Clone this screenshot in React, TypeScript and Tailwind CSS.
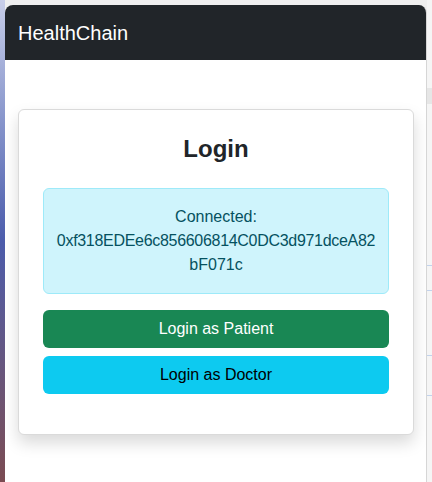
export default function App() {
  return (
    <div
      className="flex h-[482px] w-[432px] overflow-hidden bg-[#efefef]"
      style={{ fontFamily: '"Liberation Sans", "Segoe UI", Arial, sans-serif' }}
    >
      {/* desktop behind the popup */}
      <div className="h-full w-[5px] shrink-0 bg-gradient-to-b from-[#c9cfe9] via-[#4b5bab] to-[#7b4b52]" />

      <div className="mt-[5px] flex w-[422px] shrink-0 flex-col overflow-hidden rounded-t-lg border-r border-[#d6d6d6] bg-white">
        <nav className="flex h-[55px] shrink-0 items-center bg-[#212529] px-[13px]">
          <span className="text-[20px] text-white">HealthChain</span>
        </nav>

        <div className="pt-[49px] pr-[12px] pl-[13px]">
          <div className="rounded-md border border-[#dadada] bg-white p-6 shadow-[0_8px_16px_rgba(0,0,0,0.15)]">
            <h3 className="mb-6 text-center text-[24px] leading-[30px] font-bold text-[#212529]">Login</h3>

            <div className="mb-4 flex flex-col items-center rounded-md border border-[#9eeaf9] bg-[#cff4fc] p-4 text-[16px] leading-6 text-[#055160]">
              <span className="whitespace-nowrap">Connected:</span>
              <span className="whitespace-nowrap tracking-[-0.3px]">0xf318EDEe6c856606814C0DC3d971dceA82</span>
              <span className="whitespace-nowrap">bF071c</span>
            </div>

            <div className="mb-4 flex flex-col gap-2">
              <button className="h-[38px] rounded-md bg-[#198754] text-[16px] text-white">Login as Patient</button>
              <button className="h-[38px] rounded-md bg-[#0dcaf0] text-[16px] text-black">Login as Doctor</button>
            </div>
          </div>
        </div>
      </div>

      <div className="relative h-full flex-1 bg-[#f5f5f5]">
        <div className="absolute top-[88px] left-0 h-[16px] w-full bg-[#e6e6e6]" />
        <div className="absolute top-[265px] left-0 h-px w-full bg-[#c3d3ec]" />
        <div className="absolute top-[290px] left-0 h-px w-full bg-[#c3d3ec]" />
        <div className="absolute top-[355px] left-0 h-px w-full bg-[#c3d3ec]" />
        <div className="absolute top-[395px] left-0 h-px w-full bg-[#c3d3ec]" />
      </div>
    </div>
  );
}
